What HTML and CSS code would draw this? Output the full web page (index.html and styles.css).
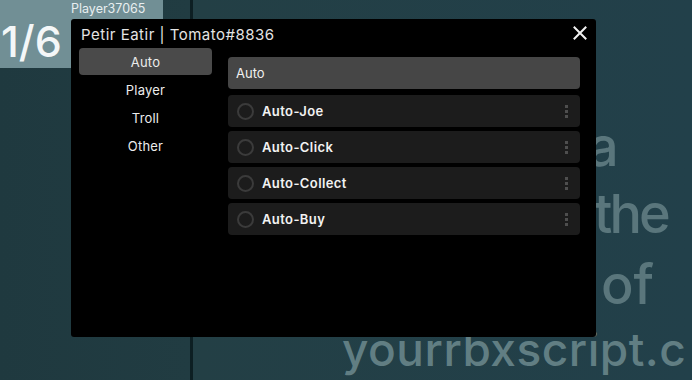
FILE: index.html
```html
<!DOCTYPE html>
<html>
<head>
<meta charset="utf-8">
<link rel="stylesheet" href="styles.css">
</head>
<body>
<div class="scene">
  <div class="divider"></div>
  <div class="world-word w-a">a</div>
  <div class="world-word w-the">the</div>
  <div class="world-word w-of">of</div>
  <div class="world-url">yourrbxscript.c</div>

  <div class="hud">
    <span class="hud-name">Player37065</span>
    <span class="hud-count">1/6</span>
  </div>

  <div class="window">
    <div class="titlebar">
      <span class="title">Petir Eatir | Tomato#8836</span>
      <svg class="close" width="14" height="14" viewBox="0 0 14 14"><path d="M1.5 1.5 L12.5 12.5 M12.5 1.5 L1.5 12.5" stroke="#f2f2f2" stroke-width="2" stroke-linecap="square"/></svg>
    </div>
    <div class="body">
      <nav class="sidebar">
        <div class="tab active">Auto</div>
        <div class="tab">Player</div>
        <div class="tab">Troll</div>
        <div class="tab">Other</div>
      </nav>
      <section class="content">
        <div class="section-head">Auto</div>
        <div class="row"><span class="radio"></span><span class="label">Auto-Joe</span><span class="dots"><i></i><i></i><i></i></span></div>
        <div class="row"><span class="radio"></span><span class="label">Auto-Click</span><span class="dots"><i></i><i></i><i></i></span></div>
        <div class="row"><span class="radio"></span><span class="label">Auto-Collect</span><span class="dots"><i></i><i></i><i></i></span></div>
        <div class="row"><span class="radio"></span><span class="label">Auto-Buy</span><span class="dots"><i></i><i></i><i></i></span></div>
      </section>
    </div>
  </div>
</div>
</body>
</html>
```
FILE: styles.css
```css
* { box-sizing: border-box; }
html, body { margin: 0; padding: 0; }
body { background: #213c42; font-family: Inter, "Noto Sans", sans-serif; }

.scene {
  position: relative;
  width: 692px;
  height: 380px;
  overflow: hidden;
  background: linear-gradient(90deg, #1f393f 0px, #213c42 190px, #233f45 193px, #22404a 692px);
}

.divider {
  position: absolute;
  left: 190px; top: 0;
  width: 3px; height: 380px;
  background: #0d1f23;
}

.world-word, .world-url {
  position: absolute;
  color: #5a767c;
  font-family: Inter, sans-serif;
  font-weight: 500;
  line-height: 1;
}
.world-word { font-size: 54px; }
.w-a { left: 588px; top: 120px; }
.w-the { left: 594px; top: 187px; letter-spacing: -3px; }
.w-of { left: 601px; top: 258px; }
.world-url {
  left: 342px; top: 326px;
  font-size: 46px;
  letter-spacing: 0.5px;
  color: #617e83;
}

.hud {
  position: absolute;
  left: 0; top: 0;
  width: 163px; height: 68px;
  background: #718f95;
}
.hud-name {
  position: absolute;
  left: 71px; top: 1px;
  font-size: 12.5px;
  color: #e8eef0;
}
.hud-count {
  position: absolute;
  left: 1px; top: 20px;
  font-size: 43px;
  font-weight: 500;
  color: #f4f7f8;
  line-height: 1;
}

.window {
  position: absolute;
  left: 71px; top: 19px;
  width: 525px; height: 318px;
  background: #000;
  border-radius: 3px;
  display: flex;
  flex-direction: column;
}

.titlebar {
  height: 29px;
  display: flex;
  align-items: center;
  justify-content: space-between;
  padding: 1px 9px 0 10px;
}
.title {
  font-size: 15px;
  color: #e4e4e4;
  letter-spacing: 0.5px;
}
.close { display: block; margin-top: -2px; }

.body {
  display: flex;
  gap: 16px;
  padding: 0 16px 0 8px;
}

.sidebar {
  width: 133px;
  display: flex;
  flex-direction: column;
}
.tab {
  height: 28px;
  display: flex;
  align-items: center;
  justify-content: center;
  font-size: 13px;
  color: #ececec;
  border-radius: 4px;
  letter-spacing: 0.2px;
}
.tab.active { background: #4a4a4a; height: 27px; margin-bottom: 1px; }

.content {
  flex: 1;
  padding-top: 9px;
  display: flex;
  flex-direction: column;
  gap: 4px;
}
.section-head {
  height: 32px;
  background: #464646;
  border-radius: 4px;
  display: flex;
  align-items: center;
  padding-left: 8px;
  font-size: 13px;
  color: #f0f0f0;
  margin-bottom: 2px;
}
.row {
  height: 32px;
  background: #1c1c1c;
  border-radius: 4px;
  display: flex;
  align-items: center;
  padding: 0 12px 0 9px;
}
.radio {
  width: 17px; height: 17px;
  border: 2px solid #3b3b3b;
  border-radius: 50%;
  flex: none;
}
.label {
  margin-left: 8px;
  font-size: 13px;
  font-weight: 600;
  color: #f2f2f2;
  flex: 1;
  letter-spacing: 0.4px;
}
.dots {
  display: flex;
  flex-direction: column;
  gap: 2px;
}
.dots i {
  display: block;
  width: 3px; height: 3px;
  background: #4e4e4e;
}
```
